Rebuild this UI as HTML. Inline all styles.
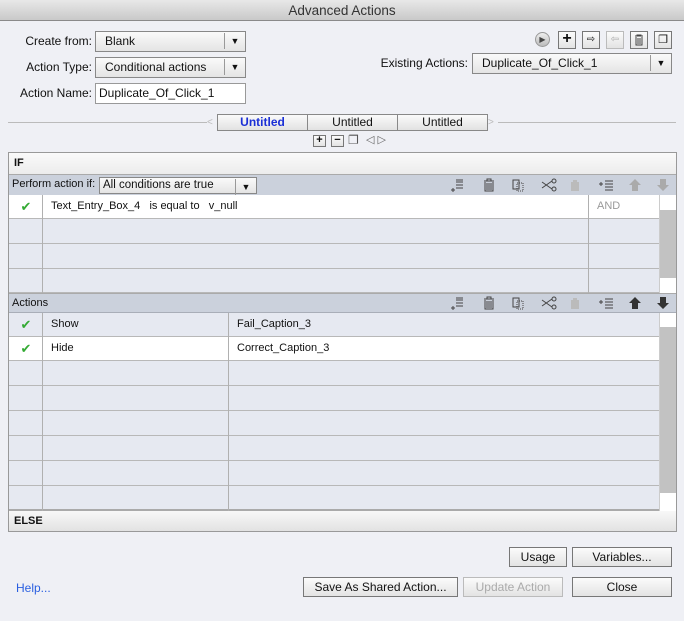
<!DOCTYPE html>
<html><head><style>
*{box-sizing:border-box;margin:0;padding:0}
body{width:684px;height:621px;background:#eff0f5;font-family:"Liberation Sans",sans-serif;font-size:12px;color:#111;position:relative;overflow:hidden}
.a{position:absolute}
.title{left:0;top:0;width:684px;height:21px;background:linear-gradient(#e8e8e8,#c9c9c9);border-bottom:1px solid #8a8a8a;text-align:center;font-size:13.5px;line-height:21px;color:#333}
.lbl{text-align:right;line-height:20px}
.dd{background:linear-gradient(#fafafa,#e4e4e4);border:1px solid #888;line-height:18px;padding-left:9px}
.dd:after{content:"▼";position:absolute;right:0;top:1px;width:20px;height:16px;border-left:1px solid #999;text-align:center;font-size:9px;line-height:16px}
.tab{top:114px;height:17px;width:91px;border:1px solid #888;background:linear-gradient(#fafafa,#e2e2e2);text-align:center;line-height:15px}
.btn{border:1px solid #777;background:linear-gradient(#fbfbfb,#e3e3e3);text-align:center;line-height:18px;font-size:12px}
.row{left:9px;width:650px;border-bottom:1px solid #b8b8b8;background:#e6e9f1}
.hdr{left:9px;width:667px;background:#cbd1dc;border-bottom:1px solid #a9aeb8;line-height:19px;padding-left:3px;font-size:11px}
.vl{width:1px;background:#b0b0b0}
.chk{color:#3a3;font-size:13px;left:10px;width:32px;text-align:center}
.t{font-size:11px}
.ln{fill:none;stroke:#444}
</style></head><body>
<div class="a title">Advanced Actions</div>

<div class="a lbl" style="left:0;width:92px;top:31px">Create from:</div>
<div class="a dd" style="left:95px;top:31px;width:151px;height:21px">Blank</div>
<div class="a lbl" style="left:0;width:92px;top:57px">Action Type:</div>
<div class="a dd" style="left:95px;top:57px;width:151px;height:21px">Conditional actions</div>
<div class="a lbl" style="left:0;width:92px;top:83px">Action Name:</div>
<div class="a" style="left:95px;top:83px;width:151px;height:21px;background:#fff;border:1px solid #999;line-height:19px;padding-left:3px">Duplicate_Of_Click_1</div>

<div class="a" style="left:535px;top:32px;width:15px;height:15px;border-radius:50%;background:linear-gradient(#eee,#bbb);border:1px solid #999;font-size:8px;line-height:13px;text-align:center;color:#444">▶</div>
<div class="a btn" style="left:558px;top:31px;width:18px;height:18px;line-height:14px;font-size:16px;font-weight:bold">+</div>
<div class="a btn" style="left:582px;top:31px;width:18px;height:18px;font-size:10px;line-height:16px">⇨</div>
<div class="a btn" style="left:606px;top:31px;width:18px;height:18px;font-size:10px;line-height:16px;color:#aaa;border-color:#bbb">⇦</div>
<div class="a btn" style="left:630px;top:31px;width:18px;height:18px"><svg width="16" height="16" viewBox="0 0 16 16"><path class="ln" d="M4 4h8M6 4V3h4v1M5 5v8h6V5M7 6v6M9 6v6"/></svg></div>
<div class="a btn" style="left:654px;top:31px;width:18px;height:18px;font-size:11px;line-height:16px">❐</div>

<div class="a lbl" style="left:360px;width:108px;top:53px">Existing Actions:</div>
<div class="a dd" style="left:472px;top:53px;width:200px;height:21px">Duplicate_Of_Click_1</div>

<div class="a" style="left:8px;top:122px;width:668px;height:1px;background:#bbb"></div>
<div class="a" style="left:207px;top:114px;width:10px;height:17px;background:#eff0f5;color:#bbb;font-size:10px;line-height:17px">&lt;</div>
<div class="a" style="left:488px;top:114px;width:10px;height:17px;background:#eff0f5;color:#bbb;font-size:10px;line-height:17px">&gt;</div>
<div class="a tab" style="left:217px;color:#1a2fd6;font-weight:bold">Untitled</div>
<div class="a tab" style="left:307px">Untitled</div>
<div class="a tab" style="left:397px">Untitled</div>
<div class="a btn" style="left:313px;top:135px;width:13px;height:12px;font-size:11px;line-height:9px;font-weight:bold">+</div>
<div class="a btn" style="left:331px;top:135px;width:13px;height:12px;font-size:11px;line-height:9px;font-weight:bold">−</div>
<div class="a" style="left:348px;top:133px;font-size:12px;color:#555">❐</div>
<div class="a" style="left:366px;top:133px;font-size:11px;color:#666">◁ ▷</div>

<div class="a" style="left:8px;top:152px;width:669px;height:380px;border:1px solid #999;background:#e6e9f1"></div>
<div class="a" style="left:9px;top:153px;width:667px;height:22px;background:linear-gradient(#fafafa,#ececec);border-bottom:1px solid #aaa;font-weight:bold;font-size:11px;line-height:20px;padding-left:5px">IF</div>
<div class="a hdr" style="top:175px;height:21px">Perform action if:</div>
<div class="a dd" style="left:99px;top:177px;width:158px;height:17px;line-height:15px;padding-left:3px;font-size:11.5px">All conditions are true</div>

<svg class="a" style="left:450px;top:176px" width="226" height="18" viewBox="0 0 226 18">
<path class="ln" d="M6 6h7M6 9h7M6 12h7M6 4h7M1 14h4M3 12v4"/>
<path class="ln" d="M34 5h10M37 5V3h4v2M35 6v9h8V6M37 7v7M39 7v7M41 7v7"/>
<rect class="ln" x="63" y="4" width="6" height="9"/><rect class="ln" x="67" y="7" width="6" height="8" stroke-dasharray="1 1"/>
<path class="ln" d="M92 6l10 7M92 12l10-7"/><circle class="ln" cx="104" cy="5" r="2"/><circle class="ln" cx="104" cy="13" r="2"/>
<rect x="121" y="6" width="8" height="9" fill="#bbb"/><rect x="123" y="4" width="4" height="3" fill="#bbb"/>
<path class="ln" d="M155 5h8M155 8h8M155 11h8M155 14h8M149 8h4M151 6v4"/>
<path d="M185 3l6 6h-3v6h-6V9h-3z" fill="#aaa"/>
<path d="M213 15l6-6h-3V3h-6v6h-3z" fill="#aaa"/>
</svg>

<div class="a row" style="top:195px;height:24px;background:#fff"></div>
<div class="a row" style="top:219px;height:25px"></div>
<div class="a row" style="top:244px;height:25px"></div>
<div class="a row" style="top:269px;height:24px"></div>
<div class="a vl" style="left:42px;top:195px;height:98px"></div>
<div class="a vl" style="left:588px;top:195px;height:98px"></div>
<div class="a chk" style="top:199px">✔</div>
<div class="a t" style="left:51px;top:200px">Text_Entry_Box_4 &nbsp;&nbsp;is equal to &nbsp;&nbsp;v_null</div>
<div class="a t" style="left:597px;top:200px;color:#999">AND</div>
<div class="a" style="left:659px;top:195px;width:17px;height:98px;background:#fff;border-left:1px solid #ccc"></div>
<div class="a" style="left:660px;top:210px;width:16px;height:68px;background:#c2c2c2"></div>

<div class="a hdr" style="top:293px;height:20px;border-top:1px solid #aaa">Actions</div>
<svg class="a" style="left:450px;top:294px" width="226" height="18" viewBox="0 0 226 18">
<path class="ln" d="M6 6h7M6 9h7M6 12h7M6 4h7M1 14h4M3 12v4"/>
<path class="ln" d="M34 5h10M37 5V3h4v2M35 6v9h8V6M37 7v7M39 7v7M41 7v7"/>
<rect class="ln" x="63" y="4" width="6" height="9"/><rect class="ln" x="67" y="7" width="6" height="8" stroke-dasharray="1 1"/>
<path class="ln" d="M92 6l10 7M92 12l10-7"/><circle class="ln" cx="104" cy="5" r="2"/><circle class="ln" cx="104" cy="13" r="2"/>
<rect x="121" y="6" width="8" height="9" fill="#bbb"/><rect x="123" y="4" width="4" height="3" fill="#bbb"/>
<path class="ln" d="M155 5h8M155 8h8M155 11h8M155 14h8M149 8h4M151 6v4"/>
<path d="M185 3l6 6h-3v6h-6V9h-3z" fill="#333"/>
<path d="M213 15l6-6h-3V3h-6v6h-3z" fill="#333"/>
</svg>
<div class="a row" style="top:313px;height:24px"></div>
<div class="a row" style="top:337px;height:24px;background:#fff"></div>
<div class="a row" style="top:361px;height:25px"></div>
<div class="a row" style="top:386px;height:25px"></div>
<div class="a row" style="top:411px;height:25px"></div>
<div class="a row" style="top:436px;height:25px"></div>
<div class="a row" style="top:461px;height:25px"></div>
<div class="a row" style="top:486px;height:25px;border-bottom:2px solid #aaa"></div>
<div class="a vl" style="left:42px;top:313px;height:198px"></div>
<div class="a vl" style="left:228px;top:313px;height:198px"></div>
<div class="a chk" style="top:317px">✔</div>
<div class="a chk" style="top:341px">✔</div>
<div class="a t" style="left:51px;top:318px">Show</div>
<div class="a t" style="left:237px;top:318px">Fail_Caption_3</div>
<div class="a t" style="left:51px;top:342px">Hide</div>
<div class="a t" style="left:237px;top:342px">Correct_Caption_3</div>
<div class="a" style="left:659px;top:313px;width:17px;height:198px;background:#fff;border-left:1px solid #ccc"></div>
<div class="a" style="left:660px;top:327px;width:16px;height:166px;background:#c2c2c2"></div>

<div class="a" style="left:9px;top:511px;width:667px;height:20px;background:linear-gradient(#f8f8f8,#e2e2e2);font-weight:bold;font-size:11px;line-height:20px;padding-left:5px">ELSE</div>

<div class="a btn" style="left:509px;top:547px;width:58px;height:20px">Usage</div>
<div class="a btn" style="left:572px;top:547px;width:100px;height:20px">Variables...</div>
<div class="a btn" style="left:303px;top:577px;width:155px;height:20px">Save As Shared Action...</div>
<div class="a btn" style="left:463px;top:577px;width:100px;height:20px;color:#aaa;border-color:#bbb">Update Action</div>
<div class="a btn" style="left:572px;top:577px;width:100px;height:20px">Close</div>
<div class="a" style="left:16px;top:581px;color:#2a5fe0">Help...</div>
</body></html>
